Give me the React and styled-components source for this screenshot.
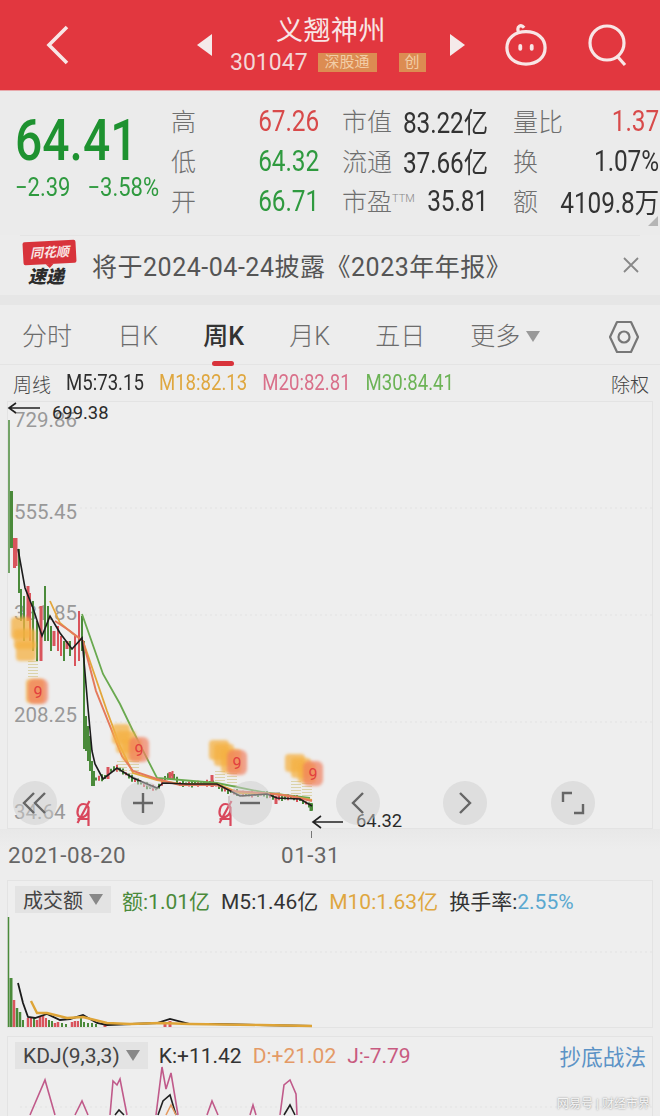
import React from 'react';
import styled, { createGlobalStyle } from 'styled-components';

const GlobalStyle = createGlobalStyle`
  html, body { margin: 0; padding: 0; background: #ededed; }
  * { box-sizing: border-box; }
`;

const CJK = `Roboto, "Noto Sans CJK SC", sans-serif`;

const Page = styled.div`
  width: 660px;
  height: 1116px;
  overflow: hidden;
  position: relative;
  background: #ededed;
  font-family: ${CJK};
  color: #333;
`;

const Header = styled.header`
  height: 91px;
  background: #e2373f;
  display: flex;
  align-items: center;
  padding-left: 45px;
  border-bottom: 1px solid #e8a9ac;
`;

const BackIcon = styled.svg`
  width: 26px;
  height: 42px;
  margin-right: 126px;
`;

const Triangle = styled.span`
  width: 0;
  height: 0;
  border-top: 11px solid transparent;
  border-bottom: 11px solid transparent;
  ${(p) => (p.$right ? 'border-left: 15px solid #f5eaea;' : 'border-right: 15px solid #f5eaea;')}
`;

const TitleBlock = styled.div`
  width: 214px;
  margin: 0 12px;
  height: 91px;
  padding-top: 13px;
  display: flex;
  flex-direction: column;
  align-items: center;
  color: #f8e6e6;
`;

const Title = styled.div`
  font-size: 27px;
  line-height: 36px;
  letter-spacing: 0.5px;
`;

const CodeRow = styled.div`
  display: flex;
  flex: none;
  align-items: center;
  gap: 10px;
  width: 202px;
  margin-top: 2px;
`;

const Code = styled.span`
  font-family: Roboto, sans-serif;
  font-size: 23px;
  line-height: 24px;
  color: #f3d8d8;
`;

const Badge = styled.span`
  background: #dc8c52;
  color: #f2cda6;
  font-size: 15px;
  line-height: 19px;
  padding: 0 ${(p) => p.$pad}px;
  margin-left: ${(p) => p.$gap || 0}px;
`;

const HeaderIcon = styled.svg`
  width: ${(p) => p.$w}px;
  height: 44px;
  margin-left: ${(p) => p.$left}px;
`;

const Quote = styled.section`
  height: 144px;
  padding: 9px 0 0 15px;
  display: flex;
  position: relative;
  background: #ebebeb;
`;

const PriceBlock = styled.div`
  width: 156px;
  padding-top: 11px;
`;

const Price = styled.div`
  font-family: Roboto, sans-serif;
  font-size: 48px;
  line-height: 60px;
  color: #1e9230;
  font-weight: 500;
  transform: scaleY(1.18);
  transform-origin: left center;
`;

const Change = styled.div`
  display: flex;
  gap: 17px;
  margin-top: 2px;
  font-family: Roboto, sans-serif;
  font-size: 22px;
  line-height: 30px;
  color: #2f9a3f;
  transform: scaleY(1.15);
`;

const Stats = styled.div`
  display: grid;
  grid-template-columns: 171px 171px 147px;
  grid-auto-rows: 40px;
`;

const Stat = styled.div`
  display: flex;
  justify-content: space-between;
  align-items: center;
  height: 40px;
  padding-right: ${(p) => p.$pr || 23}px;
  white-space: nowrap;
`;

const Label = styled.span`
  font-size: 25px;
  color: #6f6f6f;
  font-weight: 300;
`;

const Sup = styled.sup`
  font-size: 11px;
  vertical-align: 9px;
  line-height: 0;
  color: #888;
`;

const Value = styled.span`
  display: inline-block;
  font-family: ${CJK};
  font-size: 24.4px;
  letter-spacing: -0.1px;
  color: ${(p) => p.$color || '#333'};
  transform: scaleY(1.18);
`;

const Corner = styled.span`
  position: absolute;
  right: 2px;
  bottom: 9px;
  border-left: 10px solid transparent;
  border-bottom: 10px solid #b5b5b5;
`;

const Notice = styled.section`
  height: 60px;
  display: flex;
  align-items: center;
  padding: 0 21px 0 23px;
  background: #ececec;
  position: relative;
`;

const NoticeRule = styled.div`
  position: absolute;
  top: 0;
  left: 20px;
  right: 20px;
  height: 1px;
  background: #e4e4e4;
`;

const Logo = styled.div`
  width: 54px;
  height: 48px;
  display: flex;
  flex-direction: column;
  align-items: flex-start;
`;

const LogoTop = styled.div`
  position: relative;
  width: 53px;
  height: 23px;
  background: #d8333b;
  color: #f8e4e4;
  font-size: 13px;
  line-height: 23px;
  font-style: italic;
  font-weight: 700;
  text-align: center;
  transform: rotate(-3deg);
  border-radius: 2px;
  &::after {
    content: '';
    position: absolute;
    left: 22px;
    bottom: -4px;
    border-left: 4px solid transparent;
    border-right: 4px solid transparent;
    border-top: 4px solid #d8333b;
  }
`;

const LogoBottom = styled.div`
  font-size: 18px;
  line-height: 25px;
  padding-left: 5px;
  font-style: italic;
  font-weight: 900;
  color: #2c2c2c;
`;

const NoticeText = styled.div`
  margin-left: 15px;
  font-size: 25px;
  letter-spacing: 0.52px;
  color: #555;
  flex: 1;
  white-space: nowrap;
`;

const CloseIcon = styled.svg`
  width: 16px;
  height: 16px;
`;

const Band = styled.div`
  height: 10px;
  background: #e6e6e6;
`;

const Tabs = styled.nav`
  height: 60px;
  display: flex;
  align-items: center;
  gap: 45.2px;
  padding: 4px 21px 0 22px;
  border-bottom: 1px solid #e4e4e4;
`;

const Tab = styled.div`
  position: relative;
  font-size: 25px;
  line-height: 36px;
  white-space: nowrap;
  display: flex;
  align-items: center;
  color: ${(p) => (p.$active ? '#333' : '#6c6c6c')};
  font-weight: ${(p) => (p.$active ? 500 : 300)};
  &::after {
    content: '';
    display: ${(p) => (p.$active ? 'block' : 'none')};
    position: absolute;
    left: 9px;
    bottom: -11px;
    width: 22px;
    height: 5px;
    border-radius: 3px;
    background: #d8333b;
  }
`;

const Caret = styled.span`
  margin-left: 6px;
  border-left: 7px solid transparent;
  border-right: 7px solid transparent;
  border-top: 11px solid ${(p) => p.$color || '#999'};
`;

const GearIcon = styled.svg`
  margin-left: auto;
  width: 30px;
  height: 36px;
`;

const Legend = styled.div`
  height: 36px;
  display: flex;
  align-items: center;
  gap: 15px;
  padding: 0 11px 0 13px;
  font-family: Roboto, sans-serif;
  font-size: 18.6px;
  white-space: nowrap;
`;

const LegendItem = styled.span`
  display: inline-block;
  color: ${(p) => p.$color || '#2e2e2e'};
  transform: scaleY(1.14);
`;

const CnLabel = styled.span`
  font-family: ${CJK};
  font-size: 19px;
  font-weight: 300;
  color: #444;
  margin-left: ${(p) => (p.$auto ? 'auto' : '0')};
`;

const ChartPanel = styled.div`
  margin: 0 7px;
  height: 428px;
  position: relative;
  background: #eeeeee;
  border: 1px solid #e3e3e3;
`;

const ChartSvg = styled.svg`
  display: block;
  position: relative;
  width: 644px;
  height: ${(p) => p.$h}px;
  overflow: visible;
`;

const AxisLabel = styled.span`
  position: absolute;
  left: 6px;
  top: ${(p) => p.$top}px;
  font-family: Roboto, sans-serif;
  font-size: 20.5px;
  line-height: 24px;
  color: #999;
`;

const PriceMark = styled.span`
  position: absolute;
  left: ${(p) => p.$left}px;
  top: ${(p) => p.$top}px;
  font-family: Roboto, sans-serif;
  font-size: 18.4px;
  line-height: 22px;
  color: #2a2a2a;
`;

const Controls = styled.div`
  position: absolute;
  left: 5px;
  top: 379px;
  display: flex;
  gap: 63.6px;
`;

const RoundBtn = styled.button`
  width: 44px;
  height: 44px;
  padding: 0;
  border: 0;
  border-radius: 50%;
  background: rgba(205, 205, 205, 0.5);
  display: flex;
  align-items: center;
  justify-content: center;
`;

const DateRow = styled.div`
  height: 51px;
  display: flex;
  align-items: center;
  padding-left: 8px;
  gap: 155px;
  font-family: Roboto, sans-serif;
  font-size: 22.4px;
  letter-spacing: 0.5px;
  color: #666;
  position: relative;
  background: linear-gradient(#e8e8e8, #ededed 40%);
`;

const Tick = styled.span`
  position: absolute;
  left: 311px;
  top: 2px;
  width: 1px;
  height: 7px;
  background: #777;
`;

const SubPanel = styled.div`
  margin: 0 7px ${(p) => p.$mb || 0}px;
  height: ${(p) => p.$h}px;
  border: 1px solid #e3e3e3;
  background: #eeeeee;
`;

const SubHead = styled.div`
  height: 27px;
  margin: 5px 0 2px;
  display: flex;
  align-items: center;
  gap: ${(p) => p.$gap}px;
  font-size: ${(p) => p.$size}px;
  padding-right: 6px;
  white-space: nowrap;
`;

const Picker = styled.div`
  display: flex;
  align-items: center;
  height: 27px;
  margin-left: 7px;
  padding: 0 8px;
  background: #e3e3e3;
  color: #444;
  font-size: ${(p) => p.$size}px;
`;

const Reading = styled.span`
  font-family: ${CJK};
  color: ${(p) => p.$color || '#333'};
`;

const Strategy = styled.span`
  margin-left: auto;
  color: #5c93c6;
  font-size: 21.6px;
`;

const Watermark = styled.div`
  position: absolute;
  right: 10px;
  bottom: 3px;
  font-size: 12px;
  line-height: 18px;
  color: #f5f5f5;
  text-shadow: 0 0 2px #777;
`;

const G = '#4a8a3a';
const R = '#d9545c';

// x, top, bottom, colour, width
const EARLY = [
  [9, 419, 572, G, 1.5], [11.5, 490, 547, G, 3], [14.5, 537, 567, R, 3], [16.5, 537, 565, R, 2],
  [19, 548, 592, G, 2], [21, 588, 620, G, 2], [24, 595, 640, G, 2], [28, 585, 620, R, 3],
  [30, 592, 640, R, 2], [33, 600, 650, G, 2], [37, 620, 660, G, 2], [41, 605, 660, R, 3],
  [45, 585, 640, G, 2], [48, 605, 640, G, 2], [51, 625, 650, G, 2], [54, 630, 645, R, 3],
  [58, 625, 650, R, 2], [61, 635, 655, R, 2], [64, 640, 660, G, 2], [67, 640, 648, R, 3],
  [70, 640, 655, G, 2], [75, 635, 665, R, 2], [79, 610, 660, R, 2], [82, 615, 650, G, 2],
  [84, 640, 748, G, 2], [86, 715, 750, G, 2], [88, 725, 760, G, 2], [90, 735, 770, G, 2],
  [92, 760, 785, G, 2], [94, 770, 785, G, 2],
];

const TAIL_Y = [
  [96, 778], [105, 776], [112, 768], [118, 767], [125, 772], [133, 778], [145, 784], [157, 788],
  [165, 777], [172, 773], [180, 783], [195, 783], [212, 782], [218, 785], [228, 790], [245, 793],
  [265, 793], [277, 797], [290, 796], [300, 798], [312, 806],
];

const tailAt = (x) => {
  for (let i = 0; i < TAIL_Y.length - 1; i++) {
    const [x0, y0] = TAIL_Y[i];
    const [x1, y1] = TAIL_Y[i + 1];
    if (x >= x0 && x <= x1) return y0 + ((y1 - y0) * (x - x0)) / (x1 - x0);
  }
  return 790;
};

const tailCandles = Array.from({ length: 73 }, (_, i) => {
  const x = 96 + i * 3;
  const y = tailAt(x);
  const h = 3 + ((i * 7) % 5);
  return [x, y - h / 2, y + h / 2, i % 3 === 1 ? R : G, 2];
});

const TALL = [
  [108, 766, 778, R, 3], [170, 771, 778, R, 3], [172.5, 770, 778, R, 2], [212, 774, 786, R, 3],
  [276, 795, 803, R, 3], [311, 802, 810, G, 3],
];

const CANDLES = [...EARLY, ...tailCandles, ...TALL];

const BLACK_MA = 'M18 548L25 587L33 607L42 635L50 615L60 632L72 648L82 637L84 660L88 707L92 750L95 763L103 778L117 767L133 777L157 787L163 782L187 783L217 783L240 795L267 793L277 797L300 798L312 805';
const ORANGE_MA = 'M50 600L60 622L72 632L83 640L95 675L107 710L120 745L133 772L157 779L180 783L217 783L240 792L277 793L312 799';
const RED_MA = 'M55 620L70 630L83 640L96 690L110 725L122 755L133 770L157 778L180 784L217 784L232 790L262 792L290 795L312 800';
const GREEN_MA = 'M82 613L95 650L103 673L120 703L133 730L157 777L193 780L217 782L267 792L310 797';
const GRAY_MA = 'M133 776L150 786L158 788M230 790L244 795L262 793L280 792';

const BLOB_RECTS = [
  [11, 616, 20, 22], [14, 628, 22, 20], [16, 640, 20, 20],
  [26, 678, 18, 24],
  [112, 723, 18, 20], [116, 730, 20, 22], [122, 738, 20, 22],
  [209, 739, 20, 20], [214, 743, 20, 22], [221, 748, 20, 24],
  [285, 753, 20, 18], [291, 757, 20, 20], [298, 762, 18, 20],
];

const NINES = [[38, 691], [139, 749], [237, 762], [313, 773]];
const DOTS = [[33, 660, 676], [122, 760, 772], [134, 760, 775], [220, 770, 782], [232, 772, 785], [296, 780, 794], [307, 782, 797]];
const FLAGS = [83.5, 225.5];

const VOL_BARS = [
  [8.5, 917, G, 1.5], [11, 978, G, 3], [14, 1000, R, 2.5], [17, 1008, G, 2.5], [20, 1012, G, 2.5],
  [23, 1020, G, 2], [28, 1018, R, 2.5], [31, 1018, R, 2], [34, 1018, G, 2], [37, 1020, R, 2.5],
  [40, 1016, R, 2.5], [43, 1015, R, 2.5], [46, 1018, R, 2], [49, 1020, G, 2], [52, 1021, G, 2],
  [55, 1023, R, 2.5], [58, 1022, R, 2.5], [62, 1023, G, 2], [66, 1024, G, 2], [72, 1022, R, 2.5],
  [75, 1021, R, 2.5], [78, 1021, R, 2], [81, 1016, G, 2], [84, 1022, G, 2], [88, 1023, G, 2],
  [92, 1023, G, 2], [96, 1024, G, 2], [105, 1024, R, 3], [165, 1022, R, 3], [170, 1021, R, 3],
];

const VOL_BLACK = 'M18 983L23 1003L28 1017L35 1018L47 1014L60 1020L70 1019L83 1015L97 1023L107 1025L157 1023L170 1019L190 1024L215 1024L260 1025L312 1026';
const VOL_ORANGE = 'M31 1001L37 1013L47 1013L67 1018L83 1017L107 1023L130 1024L160 1023L190 1024L260 1025L312 1026';

const KDJ_PINK = 'M30 1116L45 1081L55 1116M75 1116L82 1102L88 1116M110 1116L113 1082L117 1086L120 1080L127 1116M156 1116L162 1068L166 1090L171 1074L178 1116M207 1116L212 1102L218 1116M250 1116L253 1106L256 1116M280 1116L284 1086L290 1081L296 1095L297 1116';
const KDJ_BLACK = 'M115 1116L119 1111L124 1116M158 1116L163 1102L170 1096L176 1116M284 1116L290 1106L295 1116';
const KDJ_ORANGE = 'M166 1116L171 1106L176 1116';

const PriceChart = () => (
  <ChartSvg $h={426} viewBox="8 401 644 426">
    <defs>
      <filter id="soft" x="-30%" y="-30%" width="160%" height="160%"><feGaussianBlur stdDeviation="1.4" /></filter>
    </defs>
    {[507, 614, 721].map((y) => (
      <line key={y} x1="80" x2="652" y1={y} y2={y} stroke="#e2e2e2" strokeDasharray="2 3" />
    ))}
    {CANDLES.map(([x, top, bottom, color, w], i) => (
      <line key={i} x1={x} x2={x} y1={top} y2={bottom} stroke={color} strokeWidth={w} />
    ))}
    {DOTS.map(([x, a, b]) => (
      <line key={x} x1={x} x2={x} y1={a} y2={b} stroke="#cfc27e" strokeDasharray="1 2" strokeWidth="10" opacity="0.6" />
    ))}
    <path d={GRAY_MA} fill="none" stroke="#b9b0ad" strokeWidth="1.8" />
    <path d={GREEN_MA} fill="none" stroke="#69a94f" strokeWidth="1.8" />
    <path d={ORANGE_MA} fill="none" stroke="#e3a63a" strokeWidth="1.8" />
    <path d={RED_MA} fill="none" stroke="#e4795c" strokeWidth="2" />
    <path d={BLACK_MA} fill="none" stroke="#1c1c1c" strokeWidth="1.6" />
    {BLOB_RECTS.map(([x, y, w, h]) => (
      <rect key={`${x}-${y}`} x={x} y={y} width={w} height={h} rx="4" fill="#f5b143" opacity="0.75" filter="url(#soft)" />
    ))}
    {NINES.map(([x, y]) => (
      <g key={x}>
        <rect x={x - 10} y={y - 13} width="20" height="25" rx="6" fill="#f1805f" opacity="0.7" filter="url(#soft)" />
        <text x={x} y={y + 6} textAnchor="middle" fontSize="16" fontFamily="Roboto, sans-serif" fill="#e2403e">9</text>
      </g>
    ))}
    {FLAGS.map((x) => (
      <path
        key={x}
        d={`M${x + 6} 800L${x - 6} 822M${x} 803C${x - 6} 803 ${x - 7} 812 ${x - 5} 815C${x - 2} 818 ${x + 5} 815 ${x + 5} 808C${x + 5} 805 ${x + 3} 803 ${x} 803ZM${x - 6} 818H${x + 5}M${x + 5} 806V825`}
        fill="none"
        stroke="#d9475c"
        strokeWidth="2.2"
      />
    ))}
    <path d="M229 795V802" stroke="#c9b9bb" strokeWidth="1.4" />
    <path d="M40 407H9M16 402L9 407L16 412" fill="none" stroke="#222" strokeWidth="1.6" />
    <path d="M343 821H313M321 815L313 821L321 827" fill="none" stroke="#222" strokeWidth="1.6" />
  </ChartSvg>
);

const VolumeChart = () => (
  <ChartSvg $h={112} viewBox="8 915 644 112">
    <line x1="20" x2="652" y1="952" y2="952" stroke="#e2e2e2" strokeDasharray="2 3" />
    {VOL_BARS.map(([x, top, color, w]) => (
      <line key={x} x1={x} x2={x} y1={top} y2="1027" stroke={color} strokeWidth={w} />
    ))}
    <path d={VOL_BLACK} fill="none" stroke="#1c1c1c" strokeWidth="1.8" />
    <path d={VOL_ORANGE} fill="none" stroke="#dea437" strokeWidth="2.4" />
  </ChartSvg>
);

const KdjChart = () => (
  <ChartSvg $h={44} viewBox="8 1072 644 44">
    <line x1="20" x2="652" y1="1108" y2="1108" stroke="#e2e2e2" strokeDasharray="2 3" />
    <path d={KDJ_PINK} fill="none" stroke="#c05a8a" strokeWidth="1.6" />
    <path d={KDJ_BLACK} fill="none" stroke="#222" strokeWidth="1.6" />
    <path d={KDJ_ORANGE} fill="none" stroke="#e59a60" strokeWidth="1.6" />
  </ChartSvg>
);

const ICON = { fill: 'none', stroke: '#666', strokeWidth: 2.4 };

const STATS = [
  ['高', '67.26', '#d84a4a', '市值', '83.22亿', '#333', '量比', '1.37', '#d84a4a'],
  ['低', '64.32', '#2f9a3f', '流通', '37.66亿', '#333', '换', '1.07%', '#333'],
  ['开', '66.71', '#2f9a3f', '市盈', '35.81', '#333', '额', '4109.8万', '#333'],
];

export default function App() {
  return (
    <Page>
      <GlobalStyle />
      <Header>
        <BackIcon viewBox="0 0 26 42">
          <path d="M22 3L4 21L22 39" fill="none" stroke="#f8e6e6" strokeWidth="3.6" />
        </BackIcon>
        <Triangle />
        <TitleBlock>
          <Title>义翘神州</Title>
          <CodeRow>
            <Code>301047</Code>
            <Badge $pad={7}>深股通</Badge>
            <Badge $pad={6} $gap={12}>创</Badge>
          </CodeRow>
        </TitleBlock>
        <Triangle $right />
        <HeaderIcon $w={42} $left={40} viewBox="0 0 44 44">
          <path d="M14 8C12 2 17 0 20 4M22 8C10 8 2 15 2 25C2 35 10 42 22 42C34 42 42 35 42 25C42 15 34 8 22 8Z" fill="none" stroke="#f8e6e6" strokeWidth="3.4" />
          <rect x="14" y="21" width="4" height="7" rx="2" fill="#f8e6e6" />
          <rect x="26" y="21" width="4" height="7" rx="2" fill="#f8e6e6" />
        </HeaderIcon>
        <HeaderIcon $w={42} $left={40} viewBox="0 0 42 44">
          <circle cx="20" cy="20" r="17" fill="none" stroke="#f8e6e6" strokeWidth="3.2" />
          <path d="M30 33L38 42" fill="none" stroke="#f8e6e6" strokeWidth="3.2" />
        </HeaderIcon>
      </Header>

      <Quote>
        <PriceBlock>
          <Price>64.41</Price>
          <Change>
            <span>−2.39</span>
            <span>−3.58%</span>
          </Change>
        </PriceBlock>
        <Stats>
          {STATS.map((row) => (
            <React.Fragment key={row[0]}>
              <Stat>
                <Label>{row[0]}</Label>
                <Value $color={row[2]}>{row[1]}</Value>
              </Stat>
              <Stat $pr={25}>
                <Label>
                  {row[3]}
                  {row[3] === '市盈' && <Sup>TTM</Sup>}
                </Label>
                <Value $color={row[5]}>{row[4]}</Value>
              </Stat>
              <Stat $pr={1}>
                <Label>{row[6]}</Label>
                <Value $color={row[8]}>{row[7]}</Value>
              </Stat>
            </React.Fragment>
          ))}
        </Stats>
        <Corner />
      </Quote>

      <Notice>
        <NoticeRule />
        <Logo>
          <LogoTop>同花顺</LogoTop>
          <LogoBottom>速递</LogoBottom>
        </Logo>
        <NoticeText>将于2024-04-24披露《2023年年报》</NoticeText>
        <CloseIcon viewBox="0 0 16 16">
          <path d="M1 1L15 15M15 1L1 15" stroke="#888" strokeWidth="1.8" />
        </CloseIcon>
      </Notice>
      <Band />

      <Tabs>
        <Tab>分时</Tab>
        <Tab>日K</Tab>
        <Tab $active>周K</Tab>
        <Tab>月K</Tab>
        <Tab>五日</Tab>
        <Tab>更多<Caret /></Tab>
        <GearIcon viewBox="0 0 30 36">
          <path d="M8 3H22L29 18L22 33H8L1 18Z" fill="none" stroke="#777" strokeWidth="2.2" strokeLinejoin="round" />
          <circle cx="15" cy="18" r="5.5" fill="none" stroke="#777" strokeWidth="2.2" />
        </GearIcon>
      </Tabs>

      <Legend>
        <CnLabel>周线</CnLabel>
        <LegendItem>M5:73.15</LegendItem>
        <LegendItem $color="#dfa73f">M18:82.13</LegendItem>
        <LegendItem $color="#d9708a">M20:82.81</LegendItem>
        <LegendItem $color="#6cb356">M30:84.41</LegendItem>
        <CnLabel $auto>除权</CnLabel>
      </Legend>

      <ChartPanel>
        <AxisLabel $top={6}>729.86</AxisLabel>
        <AxisLabel $top={98}>555.45</AxisLabel>
        <AxisLabel $top={199}>381.85</AxisLabel>
        <AxisLabel $top={301}>208.25</AxisLabel>
        <AxisLabel $top={398}>34.64</AxisLabel>
        <PriceChart />
        <PriceMark $left={44} $top={0}>699.38</PriceMark>
        <PriceMark $left={348} $top={408}>64.32</PriceMark>
        <Controls>
          <RoundBtn aria-label="rewind">
            <svg width="28" height="24" viewBox="0 0 28 24"><path d="M13 2L3 12L13 22M24 2L14 12L24 22" {...ICON} /></svg>
          </RoundBtn>
          <RoundBtn aria-label="zoom in">
            <svg width="22" height="22" viewBox="0 0 22 22"><path d="M11 1V21M1 11H21" {...ICON} /></svg>
          </RoundBtn>
          <RoundBtn aria-label="zoom out">
            <svg width="22" height="22" viewBox="0 0 22 22"><path d="M1 11H21" {...ICON} /></svg>
          </RoundBtn>
          <RoundBtn aria-label="previous">
            <svg width="14" height="24" viewBox="0 0 14 24"><path d="M12 2L2 12L12 22" {...ICON} /></svg>
          </RoundBtn>
          <RoundBtn aria-label="next">
            <svg width="14" height="24" viewBox="0 0 14 24"><path d="M2 2L12 12L2 22" {...ICON} /></svg>
          </RoundBtn>
          <RoundBtn aria-label="fullscreen">
            <svg width="24" height="24" viewBox="0 0 24 24"><path d="M2 11V2H11M22 13V22H13" {...ICON} /></svg>
          </RoundBtn>
        </Controls>
      </ChartPanel>

      <DateRow>
        <Tick />
        <span>2021-08-20</span>
        <span>01-31</span>
      </DateRow>

      <SubPanel $h={148} $mb={8}>
        <SubHead $size={21} $gap={11}>
          <Picker $size={20}>成交额<Caret $color="#888" /></Picker>
          <Reading $color={G}>额:1.01亿</Reading>
          <Reading>M5:1.46亿</Reading>
          <Reading $color="#dfa73f">M10:1.63亿</Reading>
          <Reading>换手率:<Reading $color="#5aa8d0">2.55%</Reading></Reading>
        </SubHead>
        <VolumeChart />
      </SubPanel>

      <SubPanel $h={90}>
        <SubHead $size={21} $gap={11}>
          <Picker $size={21}>KDJ(9,3,3)<Caret $color="#888" /></Picker>
          <Reading>K:+11.42</Reading>
          <Reading $color="#e49a66">D:+21.02</Reading>
          <Reading $color="#c85a80">J:-7.79</Reading>
          <Strategy>抄底战法</Strategy>
        </SubHead>
        <KdjChart />
      </SubPanel>

      <Watermark>网易号 | 财经市界</Watermark>
    </Page>
  );
}
